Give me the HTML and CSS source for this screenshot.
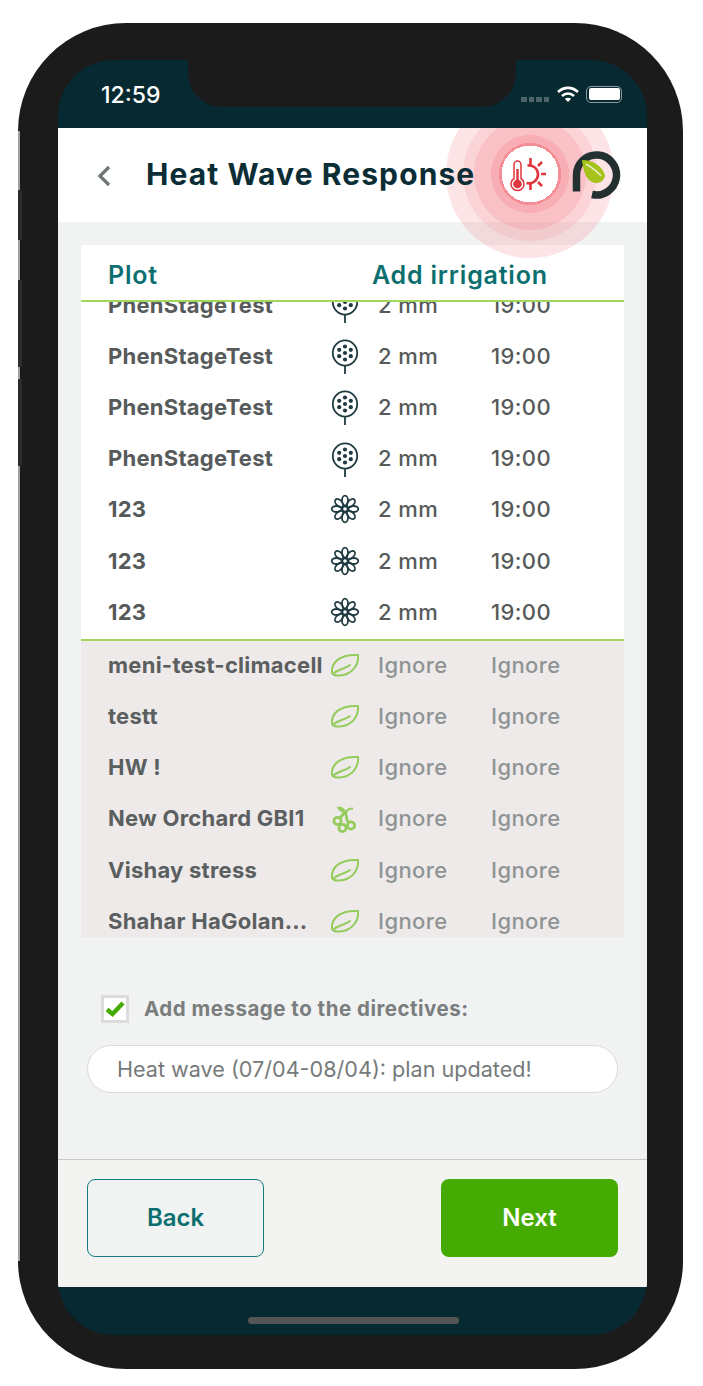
FILE: index.html
```html
<!DOCTYPE html>
<html lang="en">
<head>
    <meta charset="UTF-8">
    <meta name="viewport" content="width=device-width, initial-scale=1.0">
    <title>Heat Wave Response</title>
    <link rel="stylesheet" href="styles.css">
</head>
<body>
    <!-- Shared plant icons -->
    <svg class="defs" width="0" height="0">
        <symbol id="pod" viewBox="0 0 30 36">
            <ellipse cx="15" cy="14" rx="12.2" ry="12.6" fill="none" stroke="#1f3a40" stroke-width="1.8"/>
            <path d="M15 27v8" stroke="#1f3a40" stroke-width="1.8"/>
            <g fill="#1f3a40">
                <circle cx="15" cy="14" r="2.1"/><circle cx="15" cy="7.5" r="2.1"/><circle cx="15" cy="20.5" r="2.1"/>
                <circle cx="9.2" cy="10.8" r="2.1"/><circle cx="20.8" cy="10.8" r="2.1"/>
                <circle cx="9.2" cy="17.2" r="2.1"/><circle cx="20.8" cy="17.2" r="2.1"/>
            </g>
        </symbol>
        <symbol id="flower" viewBox="0 0 30 30">
            <g fill="none" stroke="#1f3a40" stroke-width="1.8">
                <circle cx="15" cy="15" r="2.7"/>
                <ellipse cx="15" cy="6.6" rx="3" ry="4.9"/>
                <ellipse cx="15" cy="6.6" rx="3" ry="4.9" transform="rotate(45 15 15)"/>
                <ellipse cx="15" cy="6.6" rx="3" ry="4.9" transform="rotate(90 15 15)"/>
                <ellipse cx="15" cy="6.6" rx="3" ry="4.9" transform="rotate(135 15 15)"/>
                <ellipse cx="15" cy="6.6" rx="3" ry="4.9" transform="rotate(180 15 15)"/>
                <ellipse cx="15" cy="6.6" rx="3" ry="4.9" transform="rotate(225 15 15)"/>
                <ellipse cx="15" cy="6.6" rx="3" ry="4.9" transform="rotate(270 15 15)"/>
                <ellipse cx="15" cy="6.6" rx="3" ry="4.9" transform="rotate(315 15 15)"/>
            </g>
        </symbol>
        <symbol id="leaf" viewBox="0 0 30 24">
            <path d="M2 20C1 10 9 1 28 2c1 10-6 20-19 20.500-3 .2-6-.5-7-2.500z" fill="none" stroke="#94cd5c" stroke-width="2" stroke-linejoin="round"/>
            <path d="M3 21c5-5 12-5 17-9" fill="none" stroke="#94cd5c" stroke-width="2" stroke-linecap="round"/>
        </symbol>
        <symbol id="grapes" viewBox="0 0 30 30">
            <g fill="none" stroke="#94cd5c" stroke-width="2.800">
                <circle cx="7.500" cy="18" r="3.600"/><circle cx="12.500" cy="25" r="3.600"/><circle cx="21" cy="22.500" r="3.600"/>
                <path d="M10 15l5-6M17.500 19l-2-10"/>
            </g>
            <path d="M16 9C12 10 8 8 7 4c4-1 8 1 9 5z" fill="#94cd5c"/>
            <path d="M16 9c1-2 4-3.500 7-3.500" fill="none" stroke="#94cd5c" stroke-width="2"/>
        </symbol>
    </svg>

    <div class="phone">
        <span class="side-rail"></span>
        <span class="side-btn side-mute"></span>
        <span class="side-btn side-up"></span>
        <span class="side-btn side-down"></span>

        <div class="screen">
            <div class="notch"></div>

            <!-- Status bar -->
            <div class="status">
                <span class="clock">12:59</span>
                <div class="status-icons">
                    <span class="signal"><i></i><i></i><i></i><i></i></span>
                    <svg class="wifi" width="24" height="18" viewBox="0 0 24 18">
                        <path d="M2 7c6-5.500 14-5.500 20 0M6 11c3.600-3.200 8.400-3.200 12 0" fill="none" stroke="#fff" stroke-width="2.600"/>
                        <path d="M8.800 13.800c2-1.500 4.400-1.500 6.400 0L12 17z" fill="#fff"/>
                    </svg>
                    <span class="battery"><span class="battery-fill"></span></span>
                </div>
            </div>

            <div class="main">
                <header class="header">
                    <svg class="chevron" width="14" height="22" viewBox="0 0 14 22">
                        <path d="M12 2L3 11l9 9" fill="none" stroke="#6f7677" stroke-width="3.200"/>
                    </svg>
                    <h1 class="title">Heat Wave Response</h1>
                    <svg class="logo" width="50" height="50" viewBox="0 0 50 50">
                        <path d="M21 44.500A20 20 0 1 0 5.500 25V41.500" fill="none" stroke="#22302f" stroke-width="7.500"/>
                        <path d="M11 10c11 0 20 6 23 15 0 4-4 8-8 8-8 0-13-6-15-23z" fill="#a5c31b"/>
                        <path d="M15 14c5 3 10 6 15 12" fill="none" stroke="#e8efc4" stroke-width="1.500"/>
                    </svg>
                </header>

                <!-- Pulsing alert -->
                <div class="ripple">
                    <svg width="60" height="60" viewBox="0 0 60 60">
                        <g fill="none" stroke="#e0363e" stroke-width="2.600">
                            <path d="M14 34.500V20.500a3.500 3.500 0 0 1 7 0V34.500a6.500 6.500 0 1 1-7 0z" stroke-width="1.500"/>
                            <path d="M27.500 21.500a9 9 0 1 1-1 17.500"/>
                            <path d="M30.500 14v7M30.500 40v6M41 30h5M38 22l4-4M38 38l4 4"/>
                        </g>
                        <circle cx="17.500" cy="40" r="4.300" fill="#e0363e"/>
                        <path d="M17.500 25v14" stroke="#e0363e" stroke-width="2.400"/>
                    </svg>
                </div>

                <div class="content">
                    <section class="card">
                        <div class="card-head">
                            <span>Plot</span>
                            <span>Add irrigation</span>
                        </div>
                        <div class="card-scroll">
                            <div class="rows">
                                <div class="row"><span class="name">PhenStageTest</span><svg class="pod"><use href="#pod"/></svg><span>2 mm</span><span>19:00</span></div>
                                <div class="row"><span class="name">PhenStageTest</span><svg class="pod"><use href="#pod"/></svg><span>2 mm</span><span>19:00</span></div>
                                <div class="row"><span class="name">PhenStageTest</span><svg class="pod"><use href="#pod"/></svg><span>2 mm</span><span>19:00</span></div>
                                <div class="row"><span class="name">PhenStageTest</span><svg class="pod"><use href="#pod"/></svg><span>2 mm</span><span>19:00</span></div>
                                <div class="row"><span class="name">123</span><svg class="flower"><use href="#flower"/></svg><span>2 mm</span><span>19:00</span></div>
                                <div class="row"><span class="name">123</span><svg class="flower"><use href="#flower"/></svg><span>2 mm</span><span>19:00</span></div>
                                <div class="row"><span class="name">123</span><svg class="flower"><use href="#flower"/></svg><span>2 mm</span><span>19:00</span></div>
                            </div>
                            <div class="rows rows-ignored">
                                <div class="row"><span class="name">meni-test-climacell</span><svg class="leaf"><use href="#leaf"/></svg><span>Ignore</span><span>Ignore</span></div>
                                <div class="row"><span class="name">testt</span><svg class="leaf"><use href="#leaf"/></svg><span>Ignore</span><span>Ignore</span></div>
                                <div class="row"><span class="name">HW !</span><svg class="leaf"><use href="#leaf"/></svg><span>Ignore</span><span>Ignore</span></div>
                                <div class="row"><span class="name">New Orchard GBI1</span><svg class="flower"><use href="#grapes"/></svg><span>Ignore</span><span>Ignore</span></div>
                                <div class="row"><span class="name">Vishay stress</span><svg class="leaf"><use href="#leaf"/></svg><span>Ignore</span><span>Ignore</span></div>
                                <div class="row"><span class="name">Shahar HaGolan...</span><svg class="leaf"><use href="#leaf"/></svg><span>Ignore</span><span>Ignore</span></div>
                            </div>
                        </div>
                    </section>

                    <div class="message">
                        <label class="check-line">
                            <span class="checkbox">
                                <svg width="20" height="18" viewBox="0 0 20 18"><path d="M2 9.500l5.500 4.500L18 3" fill="none" stroke="#46ab00" stroke-width="4.400"/></svg>
                            </span>
                            Add message to the directives:
                        </label>
                        <div class="message-input">Heat wave (07/04-08/04): plan updated!</div>
                    </div>
                </div>

                <footer class="footer">
                    <button class="btn btn-back">Back</button>
                    <button class="btn btn-next">Next</button>
                </footer>
            </div>

            <div class="home-bar"><span></span></div>
        </div>
    </div>
</body>
</html>
```

FILE: styles.css
```css
* { margin: 0; padding: 0; box-sizing: border-box; }
body { background: #fff; font-family: Inter, "Liberation Sans", sans-serif; }
.defs { position: absolute; }

.phone { position: relative; width: 665px; height: 1346px; margin: 23px 0 0 18px; padding: 37px 36px 34px 40px; background: #1b1b1b; border-radius: 108px; }
.side-rail { position: absolute; left: 0; top: 108px; width: 2px; height: 1130px; background: #a0a0a0; }
.side-btn { position: absolute; left: 0; width: 4px; background: #2e2b2b; }
.side-mute { top: 167px; height: 50px; }
.side-up { top: 257px; height: 87px; }
.side-down { top: 356px; height: 87px; }

.screen { position: relative; height: 100%; display: flex; flex-direction: column; background: #072a32; border-radius: 56px; overflow: hidden; }
.notch { position: absolute; top: 0; left: 130px; width: 328px; height: 47px; background: #1b1b1b; border-radius: 0 0 34px 34px; }

.status { height: 68px; flex: none; display: flex; justify-content: space-between; align-items: flex-start; padding: 22px 25px 0 43px; color: #fff; }
.clock { font-size: 23px; font-weight: 500; line-height: 27px; }
.status-icons { display: flex; align-items: center; gap: 6px; padding-top: 3px; }
.signal { display: flex; gap: 2px; margin-top: 10px; margin-right: 1px; }
.signal i { width: 5.500px; height: 5px; background: #4d6469; }
.battery { width: 36px; height: 17px; border: 1.500px solid #8d9a9c; border-radius: 5px; padding: 1.500px; }
.battery-fill { display: block; height: 100%; background: #fff; border-radius: 2px; }

.main { position: relative; flex: 1; display: flex; flex-direction: column; background: #f2f2f1; overflow: hidden; }

.header { height: 94px; flex: none; display: flex; align-items: center; background: #fff; padding: 0 26px 0 39px; }
.chevron { margin-right: 35px; margin-top: 1px; }
.title { position: relative; z-index: 2; flex: 1; margin-top: -3px; font-size: 30px; font-weight: 700; letter-spacing: 1.100px; color: #0b2d35; white-space: nowrap; }
.logo { position: relative; z-index: 2; }

.ripple { position: absolute; z-index: 1; top: -38px; left: 388px; width: 168px; height: 168px; display: flex; justify-content: center; align-items: center; border-radius: 50%;
    background: radial-gradient(circle, #fff 0 28.500px, #f58e94 28.500px 31px, rgba(243, 120, 130, .6) 31px 39px, rgba(243, 120, 130, .46) 39px 56px, rgba(243, 120, 130, .32) 56px 67px, rgba(243, 120, 130, .2) 67px 84px); }

.content { flex: 1; padding: 23px 23px 0; background: #f1f2f2; }
.card { background: #fff; }
.card-head { height: 57px; display: grid; grid-template-columns: 264px 1fr; align-items: center; padding: 5px 0 0 27px; border-bottom: 2px solid #a3d65c; font-size: 25px; font-weight: 600; letter-spacing: .8px; color: #0c6f6f; }
.card-scroll { height: 635px; overflow: hidden; }
.rows { margin-top: -23px; padding-bottom: 2px; }
.rows-ignored { margin-top: 0; padding-bottom: 0; background: #eeeaea; border-top: 2px solid #a3d65c; }
.rows-ignored .row { color: #8e9494; font-weight: 500; }
.rows-ignored .row:first-child { margin-top: -2px; }
.rows-ignored .name { color: #5b5f5f; font-weight: 700; }
.row { height: 51.200px; display: grid; grid-template-columns: 222px 48px 113px 1fr; align-items: center; padding-left: 27px; font-size: 22px; font-weight: 500; letter-spacing: .4px; color: #565a5a; }
.name { font-weight: 700; letter-spacing: .25px; white-space: nowrap; }
.pod { width: 30px; height: 36px; margin-top: 3px; }
.flower { width: 30px; height: 30px; }
.leaf { width: 30px; height: 24px; }

.message { padding: 56px 6px 0; }
.check-line { display: flex; align-items: center; gap: 15px; padding-left: 14px; font-size: 20.500px; font-weight: 700; letter-spacing: .5px; color: #7a7e7e; }
.checkbox { width: 28px; height: 28px; flex: none; display: flex; align-items: center; justify-content: center; margin-top: 2px; background: #fff; border: 3px solid #dcdcdc; }
.message-input { height: 48px; margin-top: 22px; padding-left: 29px; display: flex; align-items: center; background: #fff; border: 1.500px solid #dbdbdb; border-radius: 24px; font-size: 21.600px; color: #767a7a; white-space: nowrap; }

.footer { height: 128px; flex: none; display: flex; justify-content: space-between; padding: 19px 29px 0; background: #f3f3f2; border-top: 1px solid #c8c8c8; }
.btn { width: 177px; height: 78px; padding-bottom: 2px; border-radius: 8px; font-family: inherit; font-size: 24px; font-weight: 600; }
.btn-back { background: #f1f2f2; border: 1.500px solid #167d7f; color: #0c6f6f; }
.btn-next { background: #46ab00; border: none; color: #fff; }

.home-bar { height: 48px; flex: none; display: flex; justify-content: center; padding: 30px 0 0 1px; }
.home-bar span { width: 211px; height: 7px; background: #555; border-radius: 4px; }
```
